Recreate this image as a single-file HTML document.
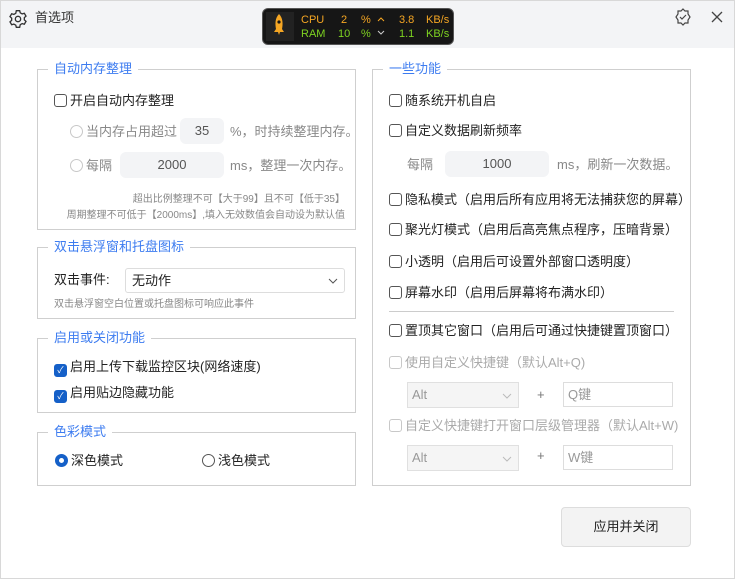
<!DOCTYPE html><html><head><meta charset="utf-8"><style>
*{box-sizing:border-box;margin:0;padding:0}
body{width:735px;height:579px;background:#fff;font-family:"Liberation Sans","Noto Sans CJK SC",sans-serif;font-size:13px;line-height:16px;color:#222;position:relative;overflow:hidden}
.frame{position:absolute;left:0;top:0;width:735px;height:579px;border:1px solid #d8d8d8;pointer-events:none}
.a{position:absolute;white-space:nowrap}
.bar{left:0;top:0;width:735px;height:48px;background:#f3f4f6}
.fs{position:absolute;border:1px solid #cfcfcf}
.lg{position:absolute;top:-9px;left:10px;background:#fff;padding:0 6px;color:#3d7cf0;font-size:13px;line-height:16px}
.cb{display:inline-block;width:13px;height:13px;border:1px solid #555;border-radius:3px;vertical-align:-2px;margin-right:3px;background:#fff}
.cbd{border-color:#c8c8c8}
.ck{background:#1560c8;border-color:#1560c8;color:#fff;font-size:9px;line-height:11px;text-align:center}
.rd{display:inline-block;width:13px;height:13px;border:1px solid #c8c8c8;border-radius:50%;vertical-align:-2px;margin-right:3px}
.g{color:#888}
.inp{position:absolute;background:#f3f4f6;border-radius:6px;text-align:center;color:#555;line-height:26px;height:26px}
.sel{position:absolute;border:1px solid #e0e0e0;background:#f5f5f5;color:#aaa;line-height:24px;height:26px;padding-left:4px}
</style></head><body>
<div class="a bar"></div>
<svg class="a" style="left:8px;top:9px" width="20" height="20" viewBox="0 0 24 24" fill="none" stroke="#333" stroke-width="1.6"><circle cx="12" cy="12" r="3.2"/><path d="M10 2h4l.7 2.6 2.3 1.3 2.6-.8 2 3.5-2 1.8v2.6l2 1.8-2 3.5-2.6-.8-2.3 1.3L14 22h-4l-.7-2.6-2.3-1.3-2.6.8-2-3.5 2-1.8V11l-2-1.8 2-3.5 2.6.8 2.3-1.3z"/></svg>
<div class="a" style="left:35px;top:10px;font-size:13px;color:#333">首选项</div>
<div class="a" style="left:262px;top:8px;width:192px;height:37px;background:#161616;border-radius:6px;border:1px solid #555"></div>
<div class="a" style="left:266px;top:12px;width:28px;height:29px;background:#222"></div>
<svg class="a" style="left:272px;top:14px" width="14" height="22" viewBox="0 0 14 22"><path d="M7 0C3 4 3 10 4 15h6c1-5 1-11-3-15z" fill="#f5a623"/><circle cx="7" cy="8" r="1.6" fill="#161616"/><path d="M4 15l-2 3h10l-2-3z" fill="#f5a623"/><path d="M6 18h2l-1 3z" fill="#f5a623"/></svg>
<div class="a" style="left:301px;top:13px;color:#f5a623;font-size:11px;line-height:14px">CPU</div>
<div class="a" style="left:341px;top:13px;color:#f5a623;font-size:11px;line-height:14px">2</div>
<div class="a" style="left:361px;top:13px;color:#f5a623;font-size:11px;line-height:14px">%</div>
<svg class="a" style="left:377px;top:16px" width="8" height="6" stroke="#f5a623" fill="none"><path d="M1 5l3-3 3 3"/></svg>
<div class="a" style="left:399px;top:13px;color:#f5a623;font-size:11px;line-height:14px">3.8</div>
<div class="a" style="left:426px;top:13px;color:#f5a623;font-size:11px;line-height:14px">KB/s</div>
<div class="a" style="left:301px;top:27px;color:#7ed321;font-size:11px;line-height:14px">RAM</div>
<div class="a" style="left:338px;top:27px;color:#7ed321;font-size:11px;line-height:14px">10</div>
<div class="a" style="left:361px;top:27px;color:#7ed321;font-size:11px;line-height:14px">%</div>
<svg class="a" style="left:377px;top:30px" width="8" height="6" stroke="#ccc" fill="none"><path d="M1 1l3 3 3-3"/></svg>
<div class="a" style="left:399px;top:27px;color:#7ed321;font-size:11px;line-height:14px">1.1</div>
<div class="a" style="left:426px;top:27px;color:#7ed321;font-size:11px;line-height:14px">KB/s</div>
<svg class="a" style="left:674px;top:8px" width="18" height="18" viewBox="0 0 18 18" fill="none" stroke="#444" stroke-width="1.2"><path d="M9 1l2 2h3v3l2 3-2 3v3h-3l-2 2-2-2H4v-3L2 9l2-3V3h3z"/><path d="M6 9l2 2 4-4"/></svg>
<svg class="a" style="left:711px;top:11px" width="12" height="12" stroke="#444" stroke-width="1.3"><path d="M1 1l10 10M11 1L1 11"/></svg>

<div class="fs" style="left:37px;top:69px;width:319px;height:161px"><div class="lg">自动内存整理</div></div>
<div class="a" style="left:54px;top:93px"><span class="cb"></span>开启自动内存整理</div>
<div class="a g" style="left:70px;top:124px"><span class="rd"></span>当内存占用超过</div>
<div class="inp" style="left:180px;top:118px;width:44px">35</div>
<div class="a g" style="left:230px;top:124px">%，时持续整理内存。</div>
<div class="a g" style="left:70px;top:158px"><span class="rd"></span>每隔</div>
<div class="inp" style="left:120px;top:152px;width:104px">2000</div>
<div class="a g" style="left:230px;top:158px">ms，整理一次内存。</div>
<div class="a g" style="right:390px;top:193px;font-size:10px;line-height:13px">超出比例整理不可【大于99】且不可【低于35】</div>
<div class="a g" style="right:390px;top:209px;font-size:10px;line-height:13px">周期整理不可低于【2000ms】,填入无效数值会自动设为默认值</div>

<div class="fs" style="left:37px;top:247px;width:319px;height:72px"><div class="lg">双击悬浮窗和托盘图标</div></div>
<div class="a" style="left:54px;top:272px">双击事件:</div>
<div class="a" style="left:125px;top:268px;width:220px;height:25px;border:1px solid #ddd;border-radius:3px;padding:4px 6px">无动作<svg style="position:absolute;right:6px;top:9px" width="10" height="6" stroke="#555" fill="none"><path d="M1 1l4 4 4-4"/></svg></div>
<div class="a g" style="left:54px;top:298px;font-size:10px;line-height:13px">双击悬浮窗空白位置或托盘图标可响应此事件</div>

<div class="fs" style="left:37px;top:338px;width:319px;height:75px"><div class="lg">启用或关闭功能</div></div>
<div class="a" style="left:54px;top:359px"><span class="cb ck">✓</span>启用上传下载监控区块(网络速度)</div>
<div class="a" style="left:54px;top:385px"><span class="cb ck">✓</span>启用贴边隐藏功能</div>

<div class="fs" style="left:37px;top:432px;width:319px;height:54px"><div class="lg">色彩模式</div></div>
<div class="a" style="left:55px;top:453px"><span class="rd" style="border:4px solid #1560c8"></span>深色模式</div>
<div class="a" style="left:202px;top:453px"><span class="rd" style="border-color:#555"></span>浅色模式</div>

<div class="fs" style="left:372px;top:69px;width:319px;height:417px"><div class="lg">一些功能</div></div>
<div class="a" style="left:389px;top:93px"><span class="cb"></span>随系统开机自启</div>
<div class="a" style="left:389px;top:123px"><span class="cb"></span>自定义数据刷新频率</div>
<div class="a g" style="left:407px;top:157px">每隔</div>
<div class="inp" style="left:445px;top:151px;width:104px">1000</div>
<div class="a g" style="left:557px;top:157px">ms，刷新一次数据。</div>
<div class="a" style="left:389px;top:192px"><span class="cb"></span>隐私模式（启用后所有应用将无法捕获您的屏幕）</div>
<div class="a" style="left:389px;top:222px"><span class="cb"></span>聚光灯模式（启用后高亮焦点程序，压暗背景）</div>
<div class="a" style="left:389px;top:254px"><span class="cb"></span>小透明（启用后可设置外部窗口透明度）</div>
<div class="a" style="left:389px;top:285px"><span class="cb"></span>屏幕水印（启用后屏幕将布满水印）</div>
<div class="a" style="left:389px;top:311px;width:285px;height:1px;background:#ccc"></div>
<div class="a" style="left:389px;top:323px"><span class="cb"></span>置顶其它窗口（启用后可通过快捷键置顶窗口）</div>
<div class="a" style="left:389px;top:355px;color:#aaa"><span class="cb cbd"></span>使用自定义快捷键（默认Alt+Q)</div>
<div class="sel" style="left:407px;top:382px;width:112px;color:#999">Alt<svg style="position:absolute;right:6px;top:10px" width="10" height="6" stroke="#bbb" fill="none"><path d="M1 1l4 4 4-4"/></svg></div>
<div class="a" style="left:537px;top:387px;color:#777">+</div>
<div class="a" style="left:563px;top:382px;width:110px;height:25px;border:1px solid #ddd;padding:4px;color:#999">Q键</div>
<div class="a" style="left:389px;top:418px;color:#aaa"><span class="cb cbd"></span>自定义快捷键打开窗口层级管理器（默认Alt+W)</div>
<div class="sel" style="left:407px;top:445px;width:112px;color:#999">Alt<svg style="position:absolute;right:6px;top:10px" width="10" height="6" stroke="#bbb" fill="none"><path d="M1 1l4 4 4-4"/></svg></div>
<div class="a" style="left:537px;top:448px;color:#777">+</div>
<div class="a" style="left:563px;top:445px;width:110px;height:25px;border:1px solid #ddd;padding:4px;color:#999">W键</div>

<div class="a" style="left:561px;top:507px;width:130px;height:40px;background:#f3f3f3;border:1px solid #ddd;border-radius:4px;text-align:center;line-height:38px">应用并关闭</div>
<div class="frame"></div>
</body></html>
